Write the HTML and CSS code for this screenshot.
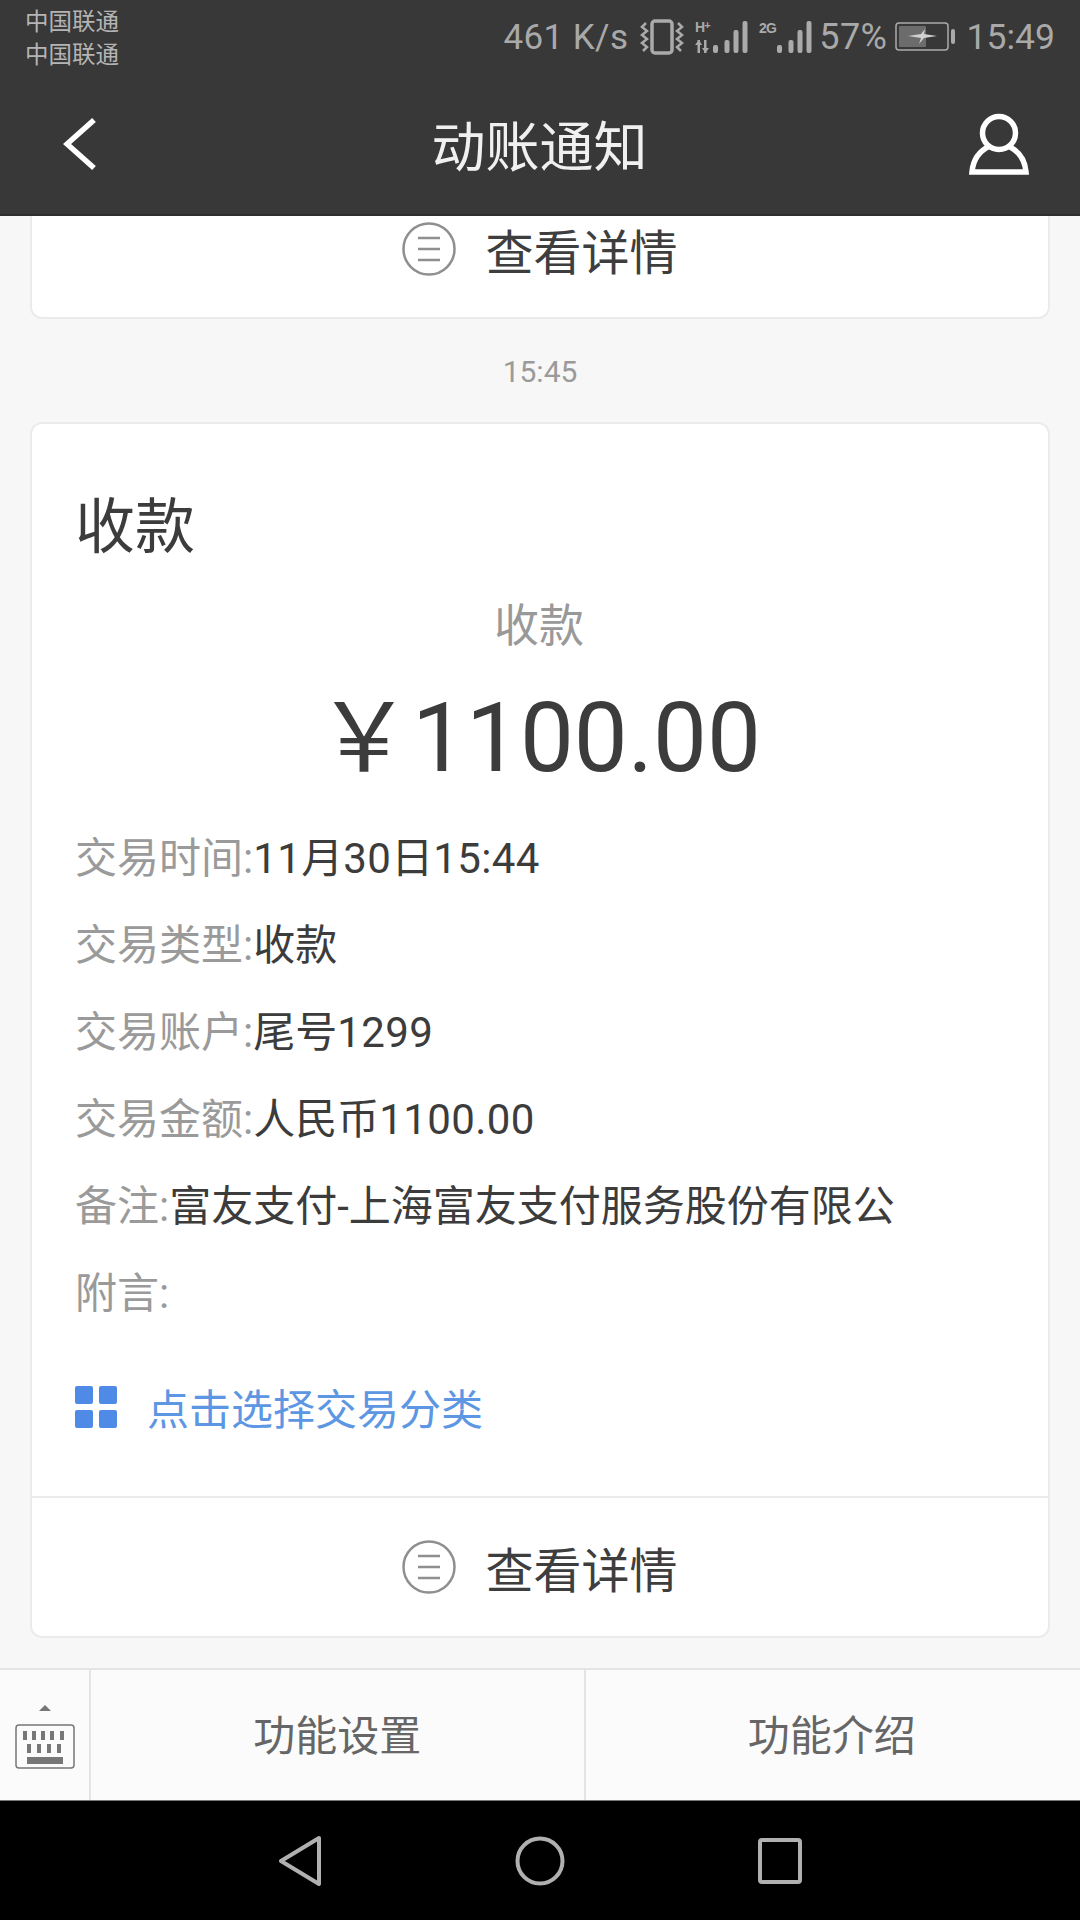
FILE: index.html
```html
<!DOCTYPE html>
<html lang="zh-CN">
<head>
<meta charset="utf-8">
<title>动账通知</title>
<link rel="stylesheet" href="styles.css">
</head>
<body>
<div class="phone">
  <header class="top">
    <div class="status">
      <div class="carriers"><span>中国联通</span><span>中国联通</span></div>
      <div class="sys">
        <span class="speed">461 K/s</span>
        <svg class="i-vib" width="44" height="36" viewBox="0 0 44 36" fill="none" stroke="#aaa"><rect x="12" y="2" width="20" height="32" rx="3" stroke-width="3.500"/><path d="M6 4L2 8l5 4-5 4 5 4-5 4 5 4-4 4M38 4l4 4-5 4 5 4-5 4 5 4-5 4 4 4" stroke-width="2.500"/></svg>
        <svg class="i-sig1" width="53" height="36" viewBox="0 0 53 36" fill="#aaa"><text x="0" y="13" class="net">H<tspan class="plus" dy="-3">+</tspan></text><path d="M2.500 21h2.500v13H2.500zM0 26l3.700-5 3.500 5zM9 21h2.500v13H9zM7 29h7l-3.500 5z"/><rect x="18" y="26" width="5" height="8" rx="2"/><rect x="29.500" y="21" width="5" height="13" rx="2"/><rect x="38.500" y="11" width="5" height="23" rx="2"/><rect x="47.500" y="2" width="5" height="32" rx="2"/></svg>
        <svg class="i-sig2" width="53" height="36" viewBox="0 0 53 36" fill="#aaa"><text x="0" y="14" class="net">2G</text><rect x="18" y="26" width="5" height="8" rx="2"/><rect x="29.500" y="21" width="5" height="13" rx="2"/><rect x="38.500" y="11" width="5" height="23" rx="2"/><rect x="47.500" y="2" width="5" height="32" rx="2"/></svg>
        <span class="pct">57%</span>
        <svg class="i-bat" width="60" height="30" viewBox="0 0 60 30"><rect x="1" y="1" width="52" height="27" rx="3" fill="none" stroke="#aaa" stroke-width="1.500"/><rect x="4" y="4" width="27" height="21" rx="1" fill="#6c6c6c"/><rect x="56" y="7" width="4" height="15" rx="2" fill="#aaa"/><path d="M13 14l13-2 4-5-1 5 13 2-13 2-5 6 2-6z" fill="#d0d0d0"/></svg>
        <span class="clock">15:49</span>
      </div>
    </div>
    <nav class="navbar">
      <svg class="back" width="34" height="54" viewBox="0 0 34 54" fill="none" stroke="#fff" stroke-width="5.500"><path d="M31 3L4 27l27 24"/></svg>
      <h1>动账通知</h1>
      <svg class="user" width="60" height="62" viewBox="0 0 60 62" fill="none" stroke="#fff" stroke-width="5.500"><circle cx="30" cy="20" r="16.500"/><path d="M21 33C10 38 4 47 3 59h54C56 47 50 38 39 33"/></svg>
    </nav>
  </header>

  <main class="feed">
    <section class="card stub">
      <div class="detail">
        <svg class="menu-ic" width="54" height="54" viewBox="0 0 54 54" fill="none" stroke="#8f8f8f"><circle cx="27" cy="27" r="25.500" stroke-width="2.500"/><path d="M16 16h22M16 27h22M16 38h22" stroke-width="2.500"/></svg>
        <span>查看详情</span>
      </div>
    </section>

    <div class="when">15:45</div>

    <section class="card">
      <div class="body">
        <h2>收款</h2>
        <div class="sub">收款</div>
        <div class="amount"><span class="yen">￥</span>1100.00</div>
        <dl class="rows">
          <div class="row"><dt>交易时间:</dt><dd><span class="num">11</span>月<span class="num">30</span>日<span class="num">15:44</span></dd></div>
          <div class="row"><dt>交易类型:</dt><dd>收款</dd></div>
          <div class="row"><dt>交易账户:</dt><dd>尾号<span class="num">1299</span></dd></div>
          <div class="row"><dt>交易金额:</dt><dd>人民币<span class="num">1100.00</span></dd></div>
          <div class="row"><dt>备注:</dt><dd>富友支付-上海富友支付服务股份有限公</dd></div>
          <div class="row"><dt>附言:</dt><dd></dd></div>
        </dl>
        <div class="classify">
          <svg width="42" height="42" viewBox="0 0 42 42" fill="#4f8ae6"><rect width="18" height="18" rx="2"/><rect x="24" width="18" height="18" rx="2"/><rect y="24" width="18" height="18" rx="2"/><rect x="24" y="24" width="18" height="18" rx="2"/></svg>
          <span>点击选择交易分类</span>
        </div>
      </div>
      <div class="detail bordered">
        <svg class="menu-ic" width="54" height="54" viewBox="0 0 54 54" fill="none" stroke="#8f8f8f"><circle cx="27" cy="27" r="25.500" stroke-width="2.500"/><path d="M16 16h22M16 27h22M16 38h22" stroke-width="2.500"/></svg>
        <span>查看详情</span>
      </div>
    </section>
  </main>

  <div class="menubar">
    <div class="kbd">
      <svg width="60" height="66" viewBox="0 0 60 66"><path d="M30 0l6 6H24z" fill="#777"/><rect x="1" y="20" width="58" height="43" rx="3" fill="none" stroke="#777" stroke-width="1.500"/><g fill="#777"><rect x="8" y="26" width="4" height="9"/><rect x="17" y="26" width="4" height="9"/><rect x="26" y="26" width="4" height="9"/><rect x="35" y="26" width="4" height="9"/><rect x="45" y="26" width="4" height="9"/><rect x="12" y="39" width="4" height="9"/><rect x="22" y="39" width="4" height="9"/><rect x="32" y="39" width="4" height="9"/><rect x="42" y="39" width="4" height="9"/><rect x="12" y="52" width="36" height="7"/></g></svg>
    </div>
    <div class="tab">功能设置</div>
    <div class="tab last">功能介绍</div>
  </div>

  <footer class="softkeys">
    <svg width="44" height="50" viewBox="0 0 44 50" fill="none" stroke="#b0b0b0" stroke-width="4" stroke-linejoin="round"><path d="M41 2L3 25l38 23z"/></svg>
    <svg width="50" height="50" viewBox="0 0 50 50" fill="none" stroke="#b0b0b0" stroke-width="4"><circle cx="25" cy="25" r="22.500"/></svg>
    <svg width="44" height="46" viewBox="0 0 44 46" fill="none" stroke="#b0b0b0" stroke-width="4"><rect x="2" y="2" width="40" height="42" rx="2"/></svg>
  </footer>
</div>
</body>
</html>
```

FILE: styles.css
```css
* { box-sizing: border-box; margin: 0; padding: 0; }
html, body { width: 1080px; height: 1920px; overflow: hidden; }
body { font-family: Roboto, "Noto Sans CJK SC", sans-serif; background: #f7f7f7; }
.phone { width: 1080px; height: 1920px; display: flex; flex-direction: column; }

.top { height: 216px; background: #383838; border-bottom: 2px solid #2f2f2f; flex: none; }
.status { height: 76px; display: flex; justify-content: space-between; padding: 6px 25px 0 25px; }
.carriers { display: flex; flex-direction: column; font-size: 23.500px; line-height: 33px; color: #b4b4b4; }
.sys { display: flex; align-items: center; height: 62px; color: #a9a9a9; font-size: 35px; }
.speed { letter-spacing: .4px; margin-right: 12px; }
.i-vib { margin-right: 11px; }
.i-sig1 { margin-right: 11px; }
.i-sig2 { margin-right: 7px; }
.pct { margin-right: 8px; letter-spacing: .3px; font-size: 36px; }
.i-bat { margin-right: 11.500px; }
.clock { font-size: 35.500px; }
.net { font-family: "Liberation Sans", sans-serif; font-size: 14px; font-weight: 700; letter-spacing: -.8px; }
.plus { font-size: 11px; }

.navbar { position: relative; height: 138px; display: flex; align-items: center; justify-content: space-between; padding: 0 51px 2px 63px; }
.navbar h1 { font-family: "Noto Sans CJK SC", sans-serif; font-weight: 400; font-size: 54px; color: #f0f0f0; position: absolute; left: 0; right: 0; top: 36px; line-height: 64px; text-align: center; margin-left: -1px; }

.feed { flex: 1; min-height: 0; padding: 0 30px; display: flex; flex-direction: column; }
.card { background: #fff; border: 2px solid #ebebeb; border-radius: 12px; }
.stub { height: 103px; border-top: 0; border-radius: 0 0 12px 12px; }
.stub .detail { height: 66px; }
.detail { display: flex; justify-content: center; align-items: center; gap: 29px; font-size: 48px; color: #3e3e3e; font-family: "Noto Sans CJK SC", sans-serif; }
.bordered { height: 140px; border-top: 2px solid #ebebeb; padding-bottom: 1px; }
.when { height: 103px; padding-top: 3px; line-height: 100px; text-align: center; font-size: 30px; color: #9a9a9a; }

.body { height: 1072px; padding: 60px 43px 0 43px; }
.body h2 { font-family: "Noto Sans CJK SC", sans-serif; font-weight: 400; font-size: 60px; line-height: 76px; color: #3c3c3c; }
.sub { text-align: center; font-family: "Noto Sans CJK SC", sans-serif; font-size: 45px; line-height: 60px; color: #999; margin-top: 33px; padding-right: 2px; }
.amount { text-align: center; font-size: 96px; line-height: 130px; color: #3c3c3c; margin-top: 12px; white-space: nowrap; padding-right: 3px; }
.yen { font-family: "Noto Sans CJK SC", sans-serif; }
.rows { margin-top: 8px; }
.row { display: flex; height: 87px; align-items: center; font-size: 42px; }
.row dt { color: #9a9a9a; white-space: nowrap; font-size: 42px; }
.row dd { color: #3c3c3c; white-space: nowrap; }
.num { letter-spacing: .4px; }
.classify { display: flex; align-items: center; gap: 30px; margin-top: 43px; color: #5d96e2; font-size: 42px; font-family: "Noto Sans CJK SC", sans-serif; }

.menubar { height: 132px; flex: none; background: #fbfbfb; border-top: 2px solid #e4e4e4; display: flex; }
.kbd { width: 91px; flex: none; display: flex; align-items: center; justify-content: center; padding-top: 6px; border-right: 2px solid #e4e4e4; }
.tab { flex: 1; display: flex; align-items: center; justify-content: center; font-size: 42px; color: #666; font-family: "Noto Sans CJK SC", sans-serif; padding-bottom: 6px; }
.tab + .tab { border-left: 2px solid #e4e4e4; }
.last { padding-right: 2px; }

.softkeys { height: 120px; flex: none; background: #000; border-top: 1px solid #777; display: flex; align-items: center; justify-content: center; gap: 193px; }
```
